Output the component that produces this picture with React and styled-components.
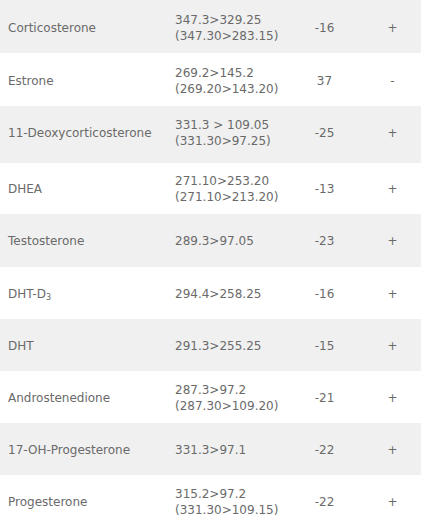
import React from "react";
import styled, { createGlobalStyle } from "styled-components";

const Global = createGlobalStyle`
  html, body { margin: 0; padding: 0; background: #fff; }
  body { font-family: "DejaVu Sans", Verdana, sans-serif; }
`;

const Table = styled.div`
  width: 421px;
  display: flex;
  flex-direction: column;
`;

const Row = styled.div`
  display: grid;
  grid-template-columns: 167px 118px 79px 57px;
  box-sizing: border-box;
  height: ${(p) => p.$h}px;
  padding-top: 2px;
  padding-bottom: ${(p) => p.$pb || 0}px;
  align-items: center;
  flex-shrink: 0;
  background: ${(p) => (p.$shaded ? "#f0f0f0" : "#ffffff")};
  color: #6a6a6a;
  font-size: 12px;
  line-height: 16px;
`;

const Cell = styled.div`
  padding: 0 8px;
  text-align: ${(p) => p.$align || "left"};
  white-space: nowrap;
`;

const Sub = styled.sub`
  font-size: 8px;
  vertical-align: -2px;
  line-height: 0;
`;

const rows = [
  ["Corticosterone", ["347.3>329.25", "(347.30>283.15)"], "-16", "+", 53],
  ["Estrone", ["269.2>145.2", "(269.20>143.20)"], "37", "-", 53],
  ["11-Deoxycorticosterone", ["331.3 > 109.05", "(331.30>97.25)"], "-25", "+", 56.7, 5],
  ["DHEA", ["271.10>253.20", "(271.10>213.20)"], "-13", "+", 51.3],
  ["Testosterone", ["289.3>97.05"], "-23", "+", 53],
  [<>DHT-D<Sub>3</Sub></>, ["294.4>258.25"], "-16", "+", 52],
  ["DHT", ["291.3>255.25"], "-15", "+", 52],
  ["Androstenedione", ["287.3>97.2", "(287.30>109.20)"], "-21", "+", 51.7],
  ["17-OH-Progesterone", ["331.3>97.1"], "-22", "+", 52.3],
  ["Progesterone", ["315.2>97.2", "(331.30>109.15)"], "-22", "+", 53],
];

export default function App() {
  return (
    <>
      <Global />
      <Table>
        {rows.map(([name, mz, ce, mode, h, pb], i) => (
          <Row key={i} $shaded={i % 2 === 0} $h={h} $pb={pb}>
            <Cell>{name}</Cell>
            <Cell>
              {mz.map((l, j) => (
                <div key={j}>{l}</div>
              ))}
            </Cell>
            <Cell $align="center">{ce}</Cell>
            <Cell $align="center">{mode}</Cell>
          </Row>
        ))}
      </Table>
    </>
  );
}
